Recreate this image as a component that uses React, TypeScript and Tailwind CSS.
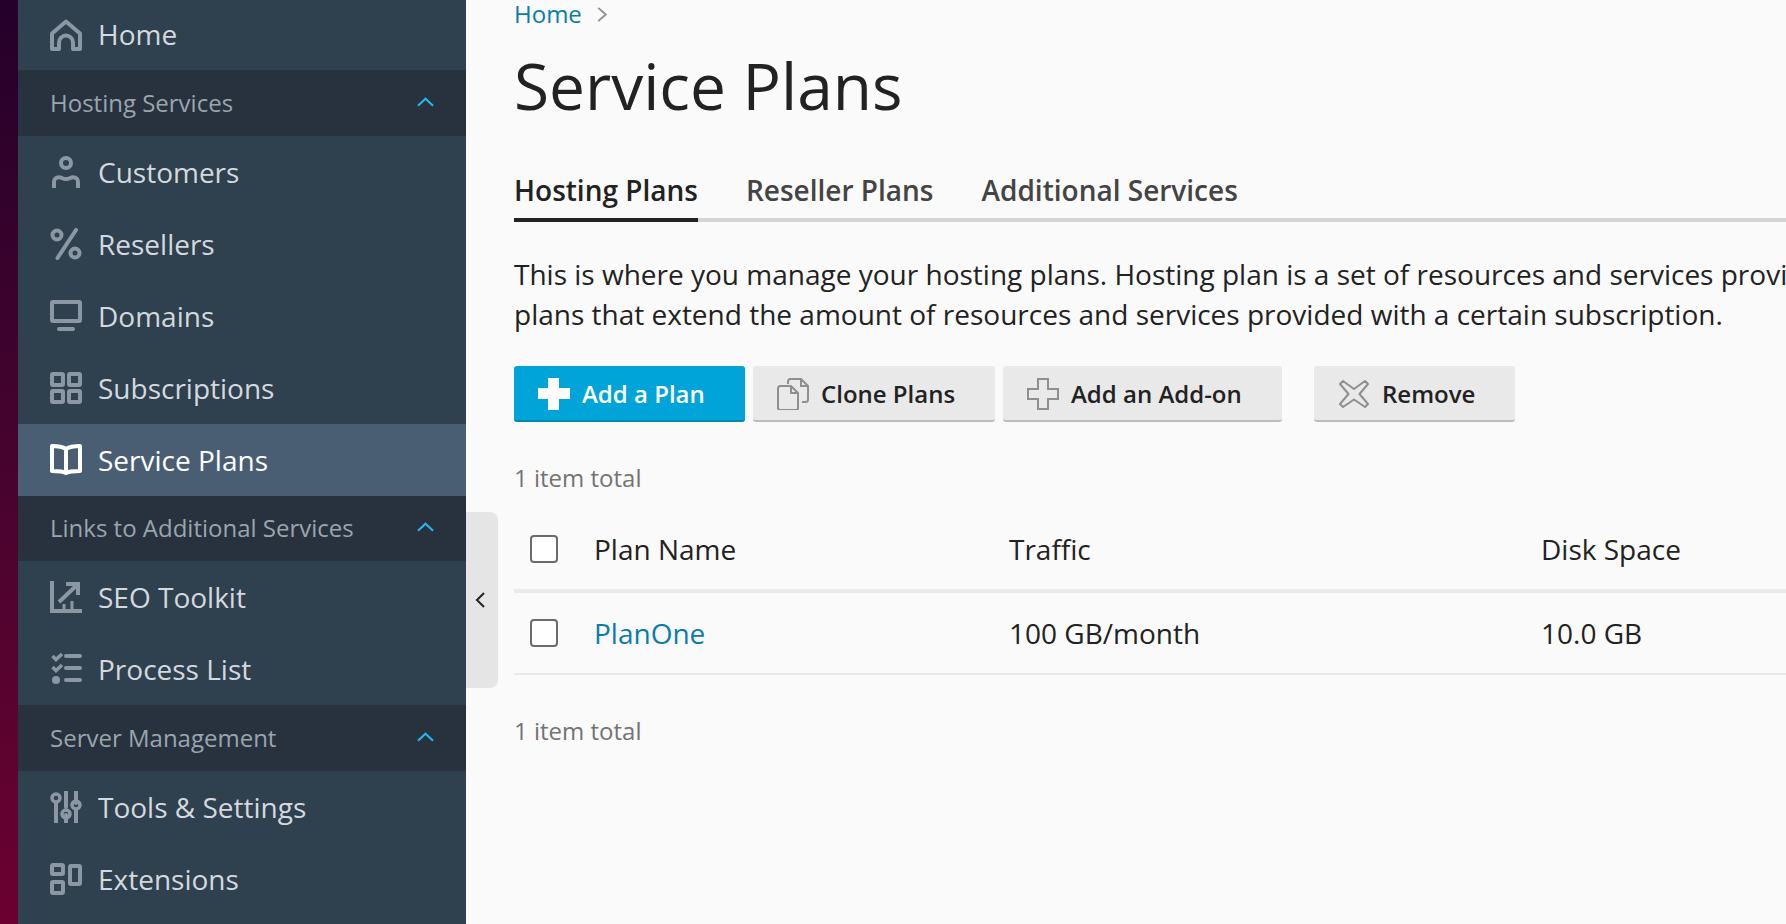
import type { ReactNode } from 'react';

function Icon({ children, className = 'text-[#8b98a3]' }: { children: ReactNode; className?: string }) {
  return (
    <svg viewBox="0 0 32 32" className={`w-8 h-8 shrink-0 ${className}`} fill="none" stroke="currentColor" strokeWidth="4">
      {children}
    </svg>
  );
}

const sidebarIcons: Record<string, ReactNode> = {
  home: (
    <path d="M2 30V14.500L16 2.500 30 14.500V30H23V23.500a7 7 0 0 0-14 0V30Z" strokeLinejoin="round" />
  ),
  user: (
    <>
      <circle cx="16" cy="7" r="5" />
      <path d="M4 31V26c0-3 2-4.800 5-4.800 2.500 0 3.500 1.800 7 1.800s4.500-1.800 7-1.800c3 0 5 1.800 5 4.800v5" strokeLinecap="round" />
    </>
  ),
  percent: (
    <>
      <circle cx="7" cy="7" r="4.500" />
      <circle cx="25" cy="25" r="4.500" />
      <path d="M26 2 7.500 30" strokeLinecap="round" />
    </>
  ),
  monitor: (
    <>
      <rect x="2" y="2" width="28" height="19" rx="1" />
      <path d="M9 29h14" strokeLinecap="round" />
    </>
  ),
  grid: (
    <>
      <rect x="2" y="2" width="11" height="11" rx="1" />
      <rect x="19" y="2" width="11" height="11" rx="1" />
      <rect x="2" y="19" width="11" height="11" rx="1" />
      <rect x="19" y="19" width="11" height="11" rx="1" />
    </>
  ),
  book: (
    <path d="M16 5C13 3 6 2 2 2V27C6 27 13 27 16 29 19 27 26 27 30 27V2C26 2 19 3 16 5ZM16 5V29" strokeLinejoin="round" />
  ),
  chart: (
    <>
      <path d="M2 0V30H32" />
      <path d="M9 21 27 4M16 3H28V14" />
      <path d="M14 29V23M22 29V20" strokeWidth="3" />
    </>
  ),
  checklist: (
    <>
      <path d="M2.500 3 6 6.500 12 1M2.500 14 6 17.500 12 12" strokeWidth="3.500" />
      <circle cx="6" cy="27" r="4" fill="currentColor" stroke="none" />
      <path d="M16 3H30M16 15H30M16 27H30" strokeLinecap="round" />
    </>
  ),
  sliders: (
    <>
      <path d="M6 12V31M16 0V16M16 24V31M26 0V12M26 20V31" strokeLinecap="round" />
      <circle cx="6" cy="7" r="4" strokeWidth="3.500" />
      <circle cx="16" cy="23" r="4" strokeWidth="3.500" />
      <circle cx="26" cy="14" r="4" strokeWidth="3.500" />
    </>
  ),
  blocks: (
    <>
      <rect x="2" y="2" width="11" height="9" rx="1" />
      <rect x="2" y="19" width="11" height="11" rx="1" />
      <rect x="20" y="3" width="10" height="18" rx="1" />
    </>
  ),
};

function NavItem({ icon, label, active }: { icon: string; label: string; active?: boolean }) {
  return (
    <div className={`h-[72px] pl-8 flex items-center gap-4 text-[28px] ${active ? 'bg-[#495e73] text-white' : 'text-[#d3d9de]'}`}>
      <Icon className={active ? 'text-white' : 'text-[#8b98a3]'}>{sidebarIcons[icon]}</Icon>
      <span>{label}</span>
    </div>
  );
}

function NavSection({ label }: { label: string }) {
  return (
    <div className="h-[65.6px] pl-8 pr-8 flex items-center justify-between bg-[#27323e] text-[24px] text-[#9aa5ae]">
      <span>{label}</span>
      <svg viewBox="0 0 18 10" className="w-[17px] h-[10px] mb-[2px] text-[#28b5ea]" fill="none" stroke="currentColor" strokeWidth="2.200">
        <path d="M1 9 9 1.500 17 9" />
      </svg>
    </div>
  );
}

function ToolbarButton({ label, icon, primary, className = '' }: { label: string; icon: ReactNode; primary?: boolean; className?: string }) {
  return (
    <button
      className={`h-14 pt-[2px] flex items-center gap-3 pl-6 rounded-[3px] border-b-2 text-[24px] font-semibold ${
        primary
          ? 'bg-[#00a4d8] border-[#0089b3] text-white'
          : 'bg-[#e9e9e9] border-[#bdbdbd] text-[#222222]'
      } ${className}`}
    >
      {icon}
      <span>{label}</span>
    </button>
  );
}

export default function App() {
  return (
    <div className="h-[924px] w-[1786px] overflow-hidden flex bg-[#fafafa] font-['Open_Sans',sans-serif]">
      <div className="w-[18px] shrink-0 bg-gradient-to-b from-[#25002a] to-[#6c0030]" />

      <nav className="w-[448px] shrink-0 bg-[#2f404f]">
        <div className="h-[70px] pl-8 flex items-center gap-4 text-[28px] text-[#d3d9de]">
          <Icon>{sidebarIcons.home}</Icon>
          <span className="pb-[2px]">Home</span>
        </div>
        <NavSection label="Hosting Services" />
        <NavItem icon="user" label="Customers" />
        <NavItem icon="percent" label="Resellers" />
        <NavItem icon="monitor" label="Domains" />
        <NavItem icon="grid" label="Subscriptions" />
        <NavItem icon="book" label="Service Plans" active />
        <NavSection label="Links to Additional Services" />
        <NavItem icon="chart" label="SEO Toolkit" />
        <NavItem icon="checklist" label="Process List" />
        <NavSection label="Server Management" />
        <NavItem icon="sliders" label="Tools & Settings" />
        <NavItem icon="blocks" label="Extensions" />
      </nav>

      <main className="relative flex-1 min-w-0 pl-12 text-[#222222]">
        <button className="absolute left-0 top-[512px] w-8 h-[176px] pl-2 flex items-center rounded-r-lg bg-[#e5e5e5]">
          <svg viewBox="0 0 12 18" className="w-3 h-[18px] text-[#222222]" fill="none" stroke="currentColor" strokeWidth="2">
            <path d="M10 2 3 9l7 7" />
          </svg>
        </button>

        <div className="h-7 flex items-center gap-[14px] text-[24px] leading-7 text-[#0a7cab]">
          <span>Home</span>
          <svg viewBox="0 0 12 18" className="w-3 h-[17px] text-[#8f8f8f]" fill="none" stroke="currentColor" strokeWidth="2">
            <path d="M2 2l8 7-8 7" />
          </svg>
        </div>

        <h1 className="mt-[17px] text-[64px] leading-[82px]">Service Plans</h1>

        <div className="mt-[45px] flex gap-12 border-b-4 border-[#d4d4d4] text-[28px] leading-[37px] font-semibold text-[#444444] h-[50px]">
          <div className="h-[50px] border-b-4 border-[#222222] text-[#222222]">Hosting Plans</div>
          <div>Reseller Plans</div>
          <div>Additional Services</div>
        </div>

        <div className="mt-[32px] text-[28px] leading-10 whitespace-nowrap">
          <div>This is where you manage your hosting plans. Hosting plan is a set of resources and services provided to customers. Add-on</div>
          <div>plans that extend the amount of resources and services provided with a certain subscription.</div>
        </div>

        <div className="mt-[32px] flex">
          <ToolbarButton
            primary
            label="Add a Plan"
            className="w-[231px]"
            icon={
              <svg viewBox="0 0 32 32" className="w-8 h-8 fill-white">
                <path d="M10 0h11v10h11v11H21v11H10V21H0V10h10Z" />
              </svg>
            }
          />
          <ToolbarButton
            label="Clone Plans"
            className="w-[242px] ml-2"
            icon={
              <svg viewBox="0 0 32 32" className="w-8 h-8 text-[#8f8f8f]" fill="none" stroke="currentColor" strokeWidth="2">
                <path d="M11 6V3.500C11 2 12 1 13.500 1H24l7 7v13.500c0 1.500-1 2.500-2.500 2.500H25M24 1v7h7" />
                <path d="M3.500 8H14l7 7v15c0 1-1 2-2 2H4c-2 0-3-1-3-2V10.500C1 9 2 8 3.500 8ZM14 8v7h7" strokeLinejoin="round" />
              </svg>
            }
          />
          <ToolbarButton
            label="Add an Add-on"
            className="w-[279px] ml-2"
            icon={
              <svg viewBox="0 0 32 32" className="w-8 h-8 text-[#8f8f8f]" fill="none" stroke="currentColor" strokeWidth="2">
                <path d="M11 1h10v10h10v10H21v10H11V21H1V11h10Z" />
              </svg>
            }
          />
          <ToolbarButton
            label="Remove"
            className="w-[201px] ml-8"
            icon={
              <svg viewBox="0 0 32 32" className="w-8 h-8 text-[#8f8f8f]" fill="none" stroke="currentColor" strokeWidth="2" strokeLinejoin="round">
                <path d="M5 3 16 11 27 3 30 6 21.500 16 30 26 27 29 16 21.500 5 29 2 26 10.500 16 2 6Z" />
              </svg>
            }
          />
        </div>

        <div className="mt-[39px] h-[34px] flex items-center text-[24px] text-[#737373]">1 item total</div>

        <div className="mt-[16px] text-[28px]">
          <div className="h-[82px] pb-[2px] flex items-center border-b-4 border-[#e9e9e9] pl-4">
            <div className="w-[28px] h-[28px] rounded-[4px] border-2 border-[#6b6b6b] bg-white" />
            <div className="w-[451px] pl-[36px]">Plan Name</div>
            <div className="w-[532px]">Traffic</div>
            <div>Disk Space</div>
          </div>
          <div className="h-[82px] flex items-center border-b-2 border-[#e9e9e9] pl-4">
            <div className="w-[28px] h-[28px] rounded-[4px] border-2 border-[#6b6b6b] bg-white" />
            <div className="w-[451px] pl-[36px] text-[#0a7cab]">PlanOne</div>
            <div className="w-[532px]">100 GB/month</div>
            <div>10.0 GB</div>
          </div>
        </div>

        <div className="mt-[39px] h-[34px] flex items-center text-[24px] text-[#737373]">1 item total</div>
      </main>
    </div>
  );
}
